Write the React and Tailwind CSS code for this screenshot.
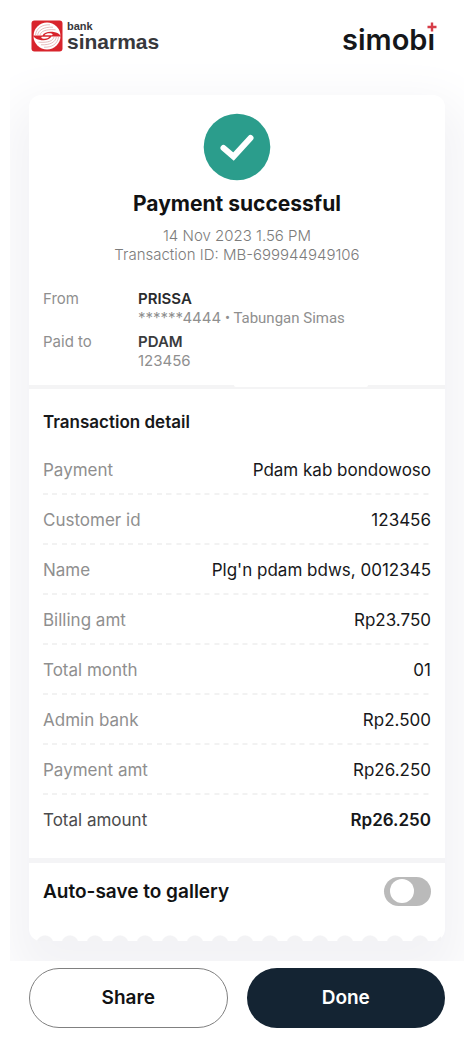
import { useState } from "react";

const rows = [
  ["Payment", "Pdam kab bondowoso"],
  ["Customer id", "123456"],
  ["Name", "Plg'n pdam bdws, 0012345"],
  ["Billing amt", "Rp23.750"],
  ["Total month", "01"],
  ["Admin bank", "Rp2.500"],
  ["Payment amt", "Rp26.250"],
];

const dashes =
  "bg-[linear-gradient(to_right,#f2f2f2_0_5px,transparent_5px_9px,#f2f2f2_9px_14px,transparent_14px)] bg-[length:19px_2px] bg-repeat-x bg-left-bottom";

function BankLogo() {
  return (
    <div className="flex items-center gap-1">
      <svg viewBox="0 0 32 32" className="size-8" aria-hidden="true">
        <rect x="0.5" y="0.5" width="31" height="31" rx="3" fill="#d8242c" />
        <circle cx="16" cy="16" r="13.500" fill="#fff" />
        <g fill="none" stroke="#dca0a2" strokeWidth="0.7">
          <path d="M4.500 15C5.500 8 11 4.500 19 4.800" />
          <path d="M6.700 15C7.500 10 12.500 6.800 22 7.200" />
          <path d="M9 15C10 11.500 14 9 24.500 9.800" />
          <path d="M27.500 17C26.500 24 21 27.500 13 27.200" />
          <path d="M25.300 17C24.500 22 19.500 25.200 10 24.800" />
          <path d="M23 17C22 20.500 18 23 7.500 22.200" />
        </g>
        <path
          d="M1.500 15.400H11.500C13 12.600 17 11.300 21.500 11.800C25 12.200 27 13 28.500 14.500L30.500 16.600H20.500C19 19.400 15 20.700 10.500 20.200C7 19.800 5 19 3.500 17.500L1.500 15.400Z"
          fill="#d8242c"
        />
        <path
          d="M13.500 15.200C15 13.400 18 12.900 20.500 13.600C22 14.100 22 15 21 15.200ZM18.500 16.800C17 18.600 14 19.100 11.500 18.400C10 17.900 10 17 11 16.800Z"
          fill="#fff"
        />
      </svg>
      <div className="flex flex-col font-['Liberation_Sans',sans-serif] font-bold text-[#37383c]">
        <span className="text-[11px] leading-[11px]">bank</span>
        <span className="text-[21px] leading-[20px]">sinarmas</span>
      </div>
    </div>
  );
}

function SimobiLogo() {
  return (
    <div
      className="relative text-[29px] leading-8 font-semibold text-[#15171a]"
      role="img"
      aria-label="simobi"
    >
      simobı
      <svg viewBox="0 0 10 10" className="absolute -top-[2px] -right-[2px] size-[10px]" aria-hidden="true">
        <path d="M5 0.500V9.500M0.500 5H9.500" stroke="#d63c48" strokeWidth="2.400" />
      </svg>
    </div>
  );
}

export default function App() {
  const [autoSave, setAutoSave] = useState(false);

  return (
    <div className="min-h-screen bg-white font-[Inter,sans-serif] text-[#17181a]">
      <header className="flex h-[60px] items-start justify-between pt-5 pr-[39px] pl-[31px]">
        <BankLogo />
        <div className="pt-1">
          <SimobiLogo />
        </div>
      </header>

      <main className="mx-[10px] overflow-hidden px-[19px] pt-[35px] pb-5">
        <div className="relative rounded-xl bg-white shadow-[0_24px_50px_20px_#f3f3f6]">
          <section className="px-[14px] pt-[18px] pb-[15px]">
            <div className="flex flex-col items-center">
              <svg viewBox="0 0 68 68" className="size-[68px]" aria-hidden="true">
                <circle cx="34" cy="34" r="33.300" fill="#2b9d8c" />
                <path
                  d="M20.500 35L30.500 43.500L47.500 25"
                  fill="none"
                  stroke="#fff"
                  strokeWidth="6"
                  strokeLinecap="round"
                />
              </svg>
              <h1 className="mt-[9px] text-[21px] leading-[28px] font-bold text-[#111213]">
                Payment successful
              </h1>
              <p className="mt-2 text-center text-[15px] leading-[19px] font-light text-[#7c7c7c]">
                14 Nov 2023 1.56 PM
                <br />
                Transaction ID: MB-699944949106
              </p>
            </div>

            <dl className="mt-[25px] grid grid-cols-[95px_1fr] gap-y-1 text-[15px] leading-[19px] text-[#8f8f8f]">
              <dt>From</dt>
              <dd>
                <div className="font-semibold text-[#2a2b2d]">PRISSA</div>
                <div>
                  ******4444<span className="font-[Roboto,sans-serif]"> • Tabungan Simas</span>
                </div>
              </dd>
              <dt>Paid to</dt>
              <dd>
                <div className="font-semibold text-[#3a3b3d]">PDAM</div>
                <div>123456</div>
              </dd>
            </dl>
          </section>

          <div className="h-1 bg-[#f4f4f5]">
            <div className="mx-auto h-[2px] w-[134px] translate-x-16 rounded-b bg-white" />
          </div>

          <section className="px-[14px] pt-[21px] pb-[13px]">
            <h2 className="text-[17px] leading-6 font-semibold">Transaction detail</h2>
            <table className="mt-[11px] w-full text-[17px] leading-6">
              <tbody>
                {rows.map(([label, value]) => (
                  <tr key={label} className={dashes}>
                    <th scope="row" className="h-[50px] text-left font-normal text-[#8f8f8f]">
                      {label}
                    </th>
                    <td className="text-right">{value}</td>
                  </tr>
                ))}
                <tr>
                  <th scope="row" className="h-[50px] text-left font-normal text-[#4b4b4d]">
                    Total amount
                  </th>
                  <td className="text-right font-semibold">Rp26.250</td>
                </tr>
              </tbody>
            </table>
          </section>

          <div className="h-[5px] bg-[#f4f4f6]" />

          <section className="flex items-center justify-between px-[14px] pt-[14px] pb-[29px]">
            <label htmlFor="auto-save" className="text-[19px] leading-[29px] font-semibold text-[#111213]">
              Auto-save to gallery
            </label>
            <input
              id="auto-save"
              type="checkbox"
              role="switch"
              checked={autoSave}
              onChange={(e) => setAutoSave(e.target.checked)}
              className="h-[29px] w-[47px] appearance-none rounded-full bg-[#bababa] p-[2px] pl-[6px] before:block before:size-6 before:rounded-full before:bg-white checked:bg-[#2b9d8c] checked:pl-[18px]"
            />
          </section>

          <div className="h-[6px] px-1">
            <div className="h-full bg-[radial-gradient(circle_at_12px_9px,#f3f3f5_8px,transparent_9px)] bg-[length:25px_6px] bg-repeat-x" />
          </div>
        </div>
      </main>

      <footer className="grid grid-cols-2 gap-[19px] px-[29px] pt-[7px] pb-[25px] text-[19px] font-semibold">
        <button type="button" className="h-[60px] rounded-full border border-[#808080] text-[#111213]">
          Share
        </button>
        <button type="button" className="h-[60px] rounded-full bg-[#142433] text-white">
          Done
        </button>
      </footer>
    </div>
  );
}
